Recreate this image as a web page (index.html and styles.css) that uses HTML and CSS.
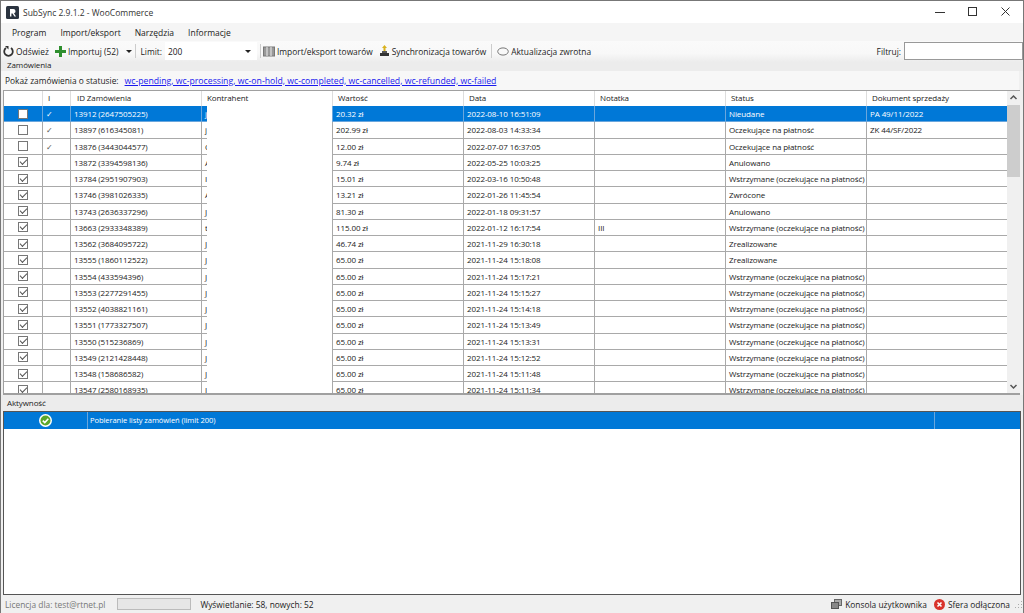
FILE: index.html
```html
<!DOCTYPE html>
<html lang="pl">
<head>
    <meta charset="UTF-8">
    <title>SubSync 2.9.1.2 - WooCommerce</title>
    <link rel="stylesheet" href="styles.css">
</head>
<body>
<div class="window">
    <!-- title bar -->
    <div class="titlebar">
        <svg class="app-icon" width="13" height="13" viewBox="0 0 13 13">
            <rect width="13" height="13" rx="1.5" fill="#2b3440"/>
            <path d="M4 10.5V3h3.4a2.2 2.2 0 0 1 .6 4.3l2 3.2H8.4L6.6 7.5H5.4v3z" fill="#fff"/>
        </svg>
        <span class="app-title">SubSync 2.9.1.2 - WooCommerce</span>
        <div class="win-buttons">
            <svg width="10" height="10" viewBox="0 0 10 10"><path d="M0 5.5h10" stroke="#333" fill="none"/></svg>
            <svg width="10" height="10" viewBox="0 0 10 10"><rect x=".5" y=".5" width="8" height="8" stroke="#333" fill="none"/></svg>
            <svg width="10" height="10" viewBox="0 0 10 10"><path d="M.5.5l8 8M8.500.5l-8 8" stroke="#333" fill="none"/></svg>
        </div>
    </div>

    <!-- menu -->
    <div class="menubar">
        <span>Program</span>
        <span>Import/eksport</span>
        <span>Narzędzia</span>
        <span>Informacje</span>
    </div>

    <!-- toolbar -->
    <div class="toolbar">
        <svg class="tool-icon" width="11" height="12" viewBox="0 0 11 12"><path d="M3 3a4.300 4.300 0 1 0 5 0" fill="none" stroke="#333" stroke-width="1.800"/><path d="M2 1h3.500v3.500z" fill="#333"/></svg>
        <span class="tool-text">Odśwież</span>
        <svg class="tool-icon plus-icon" width="11" height="11" viewBox="0 0 11 11"><path d="M4 0h3v4h4v3H7v4H4V7H0V4h4z" fill="#2f8f2f"/></svg>
        <span class="tool-text">Importuj (52)</span>
        <span class="caret caret-import"></span>
        <span class="sep"></span>
        <span class="tool-text limit-label">Limit:</span>
        <div class="combo">200<span class="caret"></span></div>
        <span class="sep"></span>
        <svg class="tool-icon" width="12" height="11" viewBox="0 0 12 11"><rect x=".5" y="1" width="11" height="9" fill="#999" stroke="#777"/><path d="M4 1v9M8 1v9" stroke="#eee"/></svg>
        <span class="tool-text">Import/eksport towarów</span>
        <svg class="tool-icon sync-icon" width="11" height="12" viewBox="0 0 11 12"><path d="M1 8h9v3H1z" fill="#333"/><path d="M3 8V6h5v2z" fill="#555"/><path d="M5.500 0l2.500 3H6.500v3h-2V3H3z" fill="#d9b21f"/></svg>
        <span class="tool-text">Synchronizacja towarów</span>
        <span class="sep sep-wide"></span>
        <svg class="tool-icon" width="12" height="9" viewBox="0 0 12 9"><ellipse cx="6" cy="4.500" rx="5.300" ry="3.600" fill="none" stroke="#777"/></svg>
        <span class="tool-text">Aktualizacja zwrotna</span>
        <div class="filter">
            <span class="tool-text">Filtruj:</span>
            <div class="filter-input"></div>
        </div>
    </div>

    <!-- orders -->
    <div class="group-label">Zamówienia</div>
    <div class="status-row">
        <span>Pokaż zamówienia o statusie:</span>
        <a class="status-link">wc-pending, wc-processing, wc-on-hold, wc-completed, wc-cancelled, wc-refunded, wc-failed</a>
    </div>

    <div class="orders">
        <div class="orders-table">
            <div class="row head">
                <div></div><div>I</div><div class="pad">ID Zamówienia</div><div>Kontrahent</div><div>Wartość</div><div>Data</div><div>Notatka</div><div>Status</div><div>Dokument sprzedaży</div>
            </div>
            <div class="row selected">
                <div class="chk"><span class="box"></span></div><div class="mark">✓</div><div>13912 (2647505225)</div><div>j</div><div>20.32 zł</div><div>2022-08-10 16:51:09</div><div></div><div>Nieudane</div><div>PA 49/11/2022</div>
            </div>
            <div class="row">
                <div class="chk"><span class="box"></span></div><div class="mark">✓</div><div>13897 (616345081)</div><div>j</div><div>202.99 zł</div><div>2022-08-03 14:33:34</div><div></div><div>Oczekujące na płatność</div><div>ZK 44/SF/2022</div>
            </div>
            <div class="row">
                <div class="chk"><span class="box"></span></div><div class="mark">✓</div><div>13876 (3443044577)</div><div>C</div><div>12.00 zł</div><div>2022-07-07 16:37:05</div><div></div><div>Oczekujące na płatność</div><div></div>
            </div>
            <div class="row">
                <div class="chk"><span class="box on"></span></div><div></div><div>13872 (3394598136)</div><div>A</div><div>9.74 zł</div><div>2022-05-25 10:03:25</div><div></div><div>Anulowano</div><div></div>
            </div>
            <div class="row">
                <div class="chk"><span class="box on"></span></div><div></div><div>13784 (2951907903)</div><div>I</div><div>15.01 zł</div><div>2022-03-16 10:50:48</div><div></div><div>Wstrzymane (oczekujące na płatność)</div><div></div>
            </div>
            <div class="row">
                <div class="chk"><span class="box on"></span></div><div></div><div>13746 (3981026335)</div><div>A</div><div>13.21 zł</div><div>2022-01-26 11:45:54</div><div></div><div>Zwrócone</div><div></div>
            </div>
            <div class="row">
                <div class="chk"><span class="box on"></span></div><div></div><div>13743 (2636337296)</div><div>J</div><div>81.30 zł</div><div>2022-01-18 09:31:57</div><div></div><div>Anulowano</div><div></div>
            </div>
            <div class="row">
                <div class="chk"><span class="box on"></span></div><div></div><div>13663 (2933348389)</div><div>t</div><div>115.00 zł</div><div>2022-01-12 16:17:54</div><div>III</div><div>Wstrzymane (oczekujące na płatność)</div><div></div>
            </div>
            <div class="row">
                <div class="chk"><span class="box on"></span></div><div></div><div>13562 (3684095722)</div><div>J</div><div>46.74 zł</div><div>2021-11-29 16:30:18</div><div></div><div>Zrealizowane</div><div></div>
            </div>
            <div class="row">
                <div class="chk"><span class="box on"></span></div><div></div><div>13555 (1860112522)</div><div>J</div><div>65.00 zł</div><div>2021-11-24 15:18:08</div><div></div><div>Zrealizowane</div><div></div>
            </div>
            <div class="row">
                <div class="chk"><span class="box on"></span></div><div></div><div>13554 (433594396)</div><div>J</div><div>65.00 zł</div><div>2021-11-24 15:17:21</div><div></div><div>Wstrzymane (oczekujące na płatność)</div><div></div>
            </div>
            <div class="row">
                <div class="chk"><span class="box on"></span></div><div></div><div>13553 (2277291455)</div><div>J</div><div>65.00 zł</div><div>2021-11-24 15:15:27</div><div></div><div>Wstrzymane (oczekujące na płatność)</div><div></div>
            </div>
            <div class="row">
                <div class="chk"><span class="box on"></span></div><div></div><div>13552 (4038821161)</div><div>J</div><div>65.00 zł</div><div>2021-11-24 15:14:18</div><div></div><div>Wstrzymane (oczekujące na płatność)</div><div></div>
            </div>
            <div class="row">
                <div class="chk"><span class="box on"></span></div><div></div><div>13551 (1773327507)</div><div>J</div><div>65.00 zł</div><div>2021-11-24 15:13:49</div><div></div><div>Wstrzymane (oczekujące na płatność)</div><div></div>
            </div>
            <div class="row">
                <div class="chk"><span class="box on"></span></div><div></div><div>13550 (515236869)</div><div>J</div><div>65.00 zł</div><div>2021-11-24 15:13:31</div><div></div><div>Wstrzymane (oczekujące na płatność)</div><div></div>
            </div>
            <div class="row">
                <div class="chk"><span class="box on"></span></div><div></div><div>13549 (2121428448)</div><div>J</div><div>65.00 zł</div><div>2021-11-24 15:12:52</div><div></div><div>Wstrzymane (oczekujące na płatność)</div><div></div>
            </div>
            <div class="row">
                <div class="chk"><span class="box on"></span></div><div></div><div>13548 (158686582)</div><div>J</div><div>65.00 zł</div><div>2021-11-24 15:11:48</div><div></div><div>Wstrzymane (oczekujące na płatność)</div><div></div>
            </div>
            <div class="row">
                <div class="chk"><span class="box on"></span></div><div></div><div>13547 (2580168935)</div><div>J</div><div>65.00 zł</div><div>2021-11-24 15:11:34</div><div></div><div>Wstrzymane (oczekujące na płatność)</div><div></div>
            </div>
            <!-- zamazane nazwy kontrahentów -->
            <div class="redact"></div>
        </div>
        <div class="scrollbar">
            <svg width="13" height="14" viewBox="0 0 13 14"><path d="M3.500 8l3-3 3 3" fill="none" stroke="#555" stroke-width="1.500"/></svg>
            <div class="scroll-track"><div class="scroll-thumb"></div></div>
            <svg width="13" height="14" viewBox="0 0 13 14"><path d="M3.500 6l3 3 3-3" fill="none" stroke="#555" stroke-width="1.500"/></svg>
        </div>
    </div>

    <!-- activity -->
    <div class="group-label activity-label">Aktywność</div>
    <div class="activity">
        <div class="activity-row">
            <div class="activity-icon">
                <svg width="13" height="13" viewBox="0 0 13 13"><circle cx="6.500" cy="6.500" r="6.500" fill="#fff"/><circle cx="6.500" cy="6.500" r="5" fill="#5aa62a"/><path d="M3.800 6.600l2 2 3.500-3.800" fill="none" stroke="#fff" stroke-width="1.600"/></svg>
            </div>
            <div class="activity-text">Pobieranie listy zamówień (limit 200)</div>
            <div></div>
        </div>
    </div>

    <!-- status bar -->
    <div class="statusbar">
        <span class="license">Licencja dla: test@rtnet.pl</span>
        <div class="progress"></div>
        <span>Wyświetlanie: 58, nowych: 52</span>
        <div class="status-right">
            <svg width="11" height="10" viewBox="0 0 11 10"><rect x="3.500" y=".5" width="7" height="6" fill="#aaa" stroke="#666"/><rect x=".5" y="3.500" width="7" height="6" fill="#888" stroke="#555"/></svg>
            <span>Konsola użytkownika</span>
            <svg class="err-icon" width="11" height="11" viewBox="0 0 11 11"><circle cx="5.500" cy="5.500" r="5.500" fill="#d8332b"/><path d="M3.500 3.500l4 4M7.500 3.500l-4 4" stroke="#fff" stroke-width="1.600"/></svg>
            <span>Sfera odłączona</span>
            <svg class="grip" width="9" height="9" viewBox="0 0 9 9"><path d="M7 1h1v1H7zM4 4h1v1H4zM7 4h1v1H7zM1 7h1v1H1zM4 7h1v1H4zM7 7h1v1H7z" fill="#aaa"/></svg>
        </div>
    </div>
</div>
</body>
</html>
```

FILE: styles.css
```css
:root {
    --blue: #0078d7;
    --line: #a9a9a9;
    --text: #222;
}

* {
    box-sizing: border-box;
}

html, body {
    margin: 0;
    height: 100%;
    overflow: hidden;
}

body {
    font-family: "Open Sans", "Noto Sans", sans-serif;
    font-size: 8px;
    letter-spacing: -0.1px;
    color: var(--text);
}

.window {
    width: 1024px;
    height: 613px;
    display: flex;
    flex-direction: column;
    background: #f0f0f0;
    border: 1px solid #777;
    border-bottom: 0;
}

/* title bar */
.titlebar {
    height: 22px;
    flex: none;
    display: flex;
    align-items: center;
    padding-left: 5px;
    background: #fff;
}

.app-title {
    margin-left: 4px;
    font-size: 8.500px;
    letter-spacing: 0;
    color: #333;
}

.win-buttons {
    margin-left: auto;
    display: flex;
    gap: 23px;
    padding-right: 12px;
}

/* menu */
.menubar {
    height: 18px;
    flex: none;
    display: flex;
    align-items: center;
    gap: 14px;
    padding-left: 11px;
    background: #f5f5f5;
    font-size: 8.500px;
    letter-spacing: 0;
}

/* toolbar */
.toolbar {
    height: 21px;
    flex: none;
    display: flex;
    align-items: center;
    padding: 0 0 1px 2px;
    background: linear-gradient(#fafafa, #f8f8f8 60%, #ececec);
}

.tool-text {
    font-size: 8.400px;
    letter-spacing: 0;
    margin-left: 2px;
    white-space: nowrap;
}

.plus-icon {
    margin-left: 6px;
}

.sync-icon {
    margin-left: 6px;
}

.caret {
    width: 0;
    height: 0;
    border: 3px solid transparent;
    border-top: 3px solid #222;
    border-bottom: 0;
}

.caret-import {
    margin-left: 8px;
}

.sep {
    width: 1px;
    height: 14px;
    margin: 0 2px 0 3px;
    background: #ccc;
}

.sep-wide {
    margin: 0 5px;
}

.limit-label {
    margin-left: 2px;
}

.combo {
    width: 92px;
    height: 18px;
    margin-left: 3px;
    display: flex;
    align-items: center;
    justify-content: space-between;
    padding: 0 6px 0 3px;
    background: #fff;
    font-size: 8.400px;
    letter-spacing: 0;
}

.filter {
    margin-left: auto;
    display: flex;
    align-items: center;
    gap: 3px;
}

.filter-input {
    width: 119px;
    height: 18px;
    background: #fff;
    border: 1px solid #999;
}

/* orders */
.group-label {
    height: 9px;
    flex: none;
    padding-left: 6px;
    font-size: 8px;
    line-height: 6px;
    background: #ececec;
}

.status-row {
    height: 19px;
    flex: none;
    display: flex;
    align-items: center;
    gap: 6px;
    margin-right: 4px;
    padding-left: 4px;
    background: #f7f7f7;
    font-size: 8.350px;
    letter-spacing: 0;
}

.status-link {
    color: #1a1aee;
    font-size: 8.700px;
    text-decoration: underline;
}

.orders {
    height: 305px;
    flex: none;
    display: flex;
    margin: 0 3px 0 2px;
    background: #fff;
    border: 1px solid #a0a0a0;
    border-width: 1px 0 2px 1px;
    overflow: hidden;
}

.orders-table {
    position: relative;
    flex: 1;
    overflow: hidden;
}

.row {
    height: 16.250px;
    display: grid;
    grid-template-columns: 39px 28px 131px 131px 131px 131px 131px 141px 1fr;
    background: #fff;
}

.row > div {
    padding-left: 3px;
    line-height: 15.250px;
    white-space: nowrap;
    overflow: hidden;
    border-right: 1px solid var(--line);
    border-bottom: 1px solid var(--line);
}

.row > div:last-child {
    border-right: 0;
}

.head {
    height: 15px;
}

.row.head > div {
    padding-left: 5px;
    line-height: 14px;
    border-bottom: 0;
    border-right-color: #ddd;
}

.row.head > .pad {
    padding-left: 6px;
}

.selected {
    background: var(--blue);
    color: #fff;
}

.selected > div {
    border-color: #6aa6dc;
}

.row > .chk {
    display: flex;
    align-items: center;
    justify-content: center;
    padding-left: 0;
}

.box {
    width: 10px;
    height: 10px;
    background: #fff;
    border: 1px solid #777;
}

.box.on::after {
    content: "";
    display: block;
    width: 6px;
    height: 3px;
    margin: 1px 0 0 1px;
    border-left: 1px solid #555;
    border-bottom: 1px solid #555;
    transform: rotate(-45deg);
}

.mark {
    font-size: 8px;
    color: #555;
}

.selected .mark {
    color: #fff;
}

/* biały prostokąt na nazwach */
.redact {
    position: absolute;
    left: 203px;
    top: 15px;
    width: 125px;
    bottom: 0;
    background: #fff;
}

.scrollbar {
    width: 13px;
    flex: none;
    display: flex;
    flex-direction: column;
    background: #f0f0f0;
}

.scrollbar svg {
    flex: none;
}

.scroll-track {
    flex: 1;
}

.scroll-thumb {
    height: 72px;
    background: #cdcdcd;
}

/* activity */
.group-label.activity-label {
    height: 16px;
    line-height: 16px;
}

.activity {
    height: 184px;
    flex: none;
    margin: 0 2px;
    background: #fff;
    border: 1px solid #555;
}

.activity-row {
    height: 17px;
    display: grid;
    grid-template-columns: 84px 847px 1fr;
    background: var(--blue);
    color: #fff;
}

.activity-row > div {
    border-right: 1px solid #6aa6dc;
}

.activity-row > div:last-child {
    border-right: 0;
}

.activity-icon {
    display: flex;
    align-items: center;
    justify-content: center;
}

.activity-text {
    padding-left: 2px;
    font-size: 7.600px;
    line-height: 17px;
}

/* status bar */
.statusbar {
    flex: 1;
    display: flex;
    align-items: center;
    padding-left: 4px;
    font-size: 8.400px;
    letter-spacing: 0;
}

.license {
    color: #777;
}

.progress {
    width: 74px;
    height: 12px;
    margin: 0 9px 0 12px;
    background: #e6e6e6;
    border: 1px solid #bbb;
}

.status-right {
    margin-left: auto;
    display: flex;
    align-items: center;
    gap: 3px;
}

.err-icon {
    margin-left: 4px;
}

.grip {
    margin-left: 1px;
}
```
